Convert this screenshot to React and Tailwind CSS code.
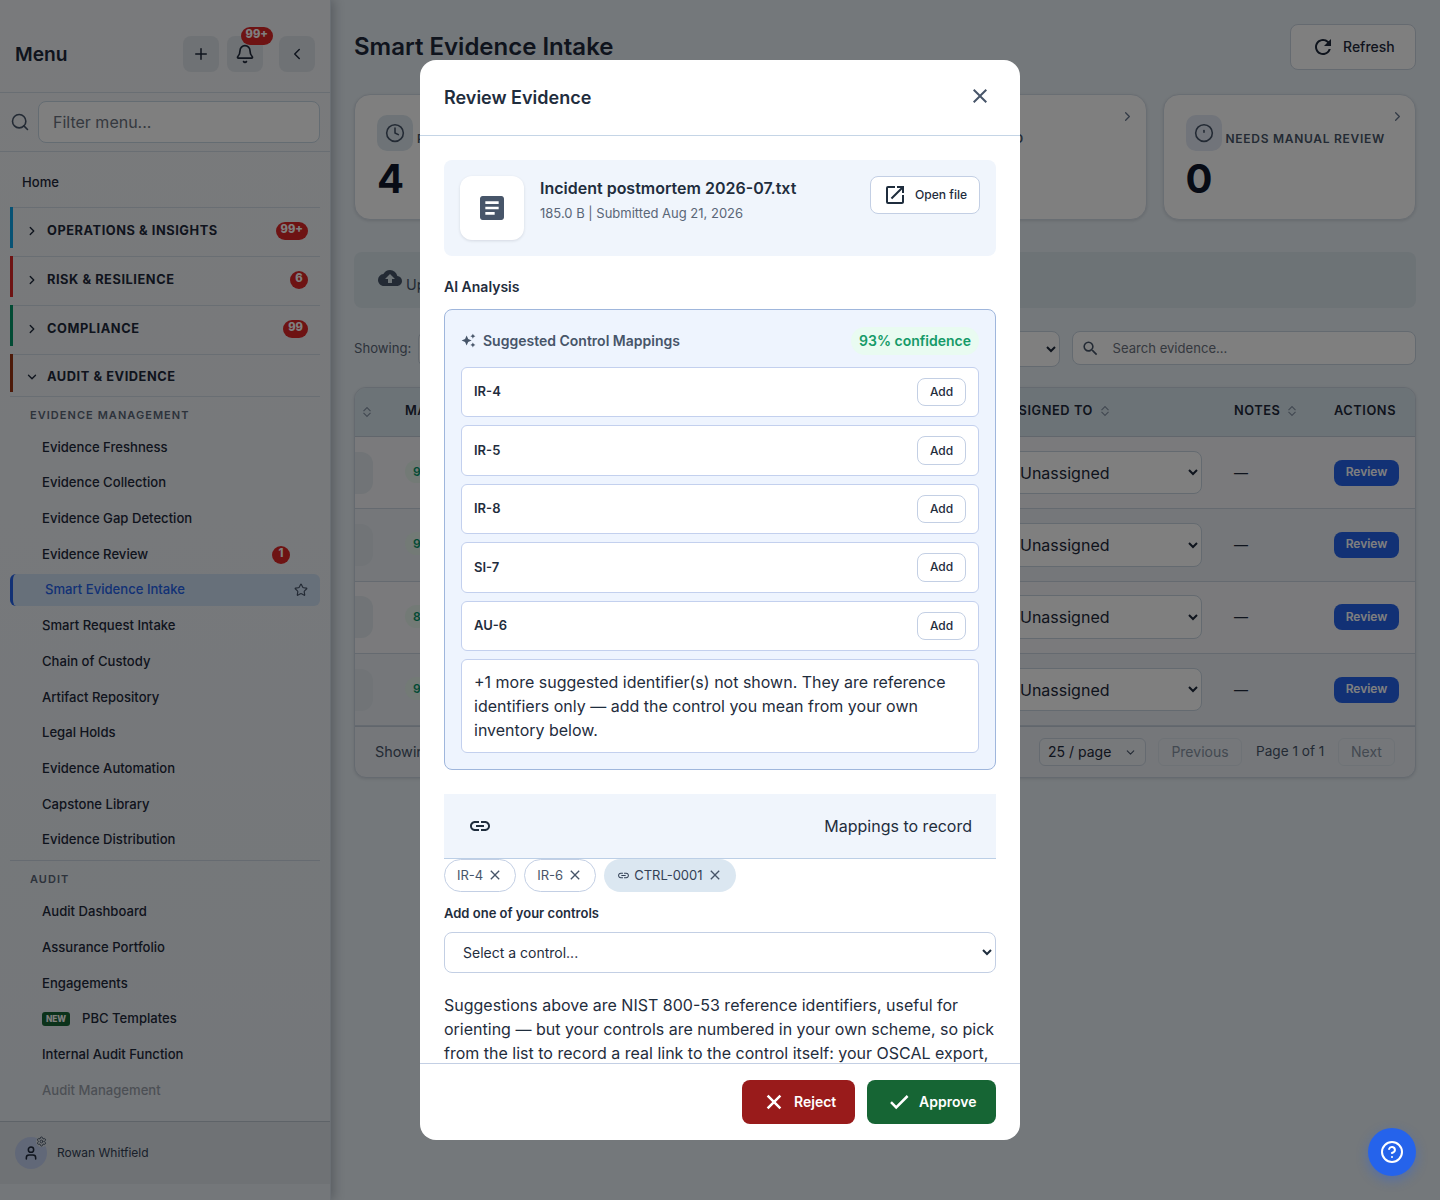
import {
  Bell,
  ChevronDown,
  ChevronLeft,
  ChevronRight,
  CircleHelp,
  Clock,
  Plus,
  Search,
  Settings,
  Star,
  User,
} from "lucide-react";
import {
  MdArticle,
  MdAutoAwesome,
  MdCheck,
  MdClose,
  MdCloudUpload,
  MdLink,
  MdOpenInNew,
  MdRefresh,
  MdSearch,
} from "react-icons/md";

const sections = [
  { label: "Operations & Insights", color: "border-[#0ea5e9]", badge: "99+" },
  { label: "Risk & Resilience", color: "border-[#dc2626]", badge: "6" },
  { label: "Compliance", color: "border-[#059669]", badge: "99" },
];

const evidenceLinks = [
  { label: "Evidence Freshness" },
  { label: "Evidence Collection" },
  { label: "Evidence Gap Detection" },
  { label: "Evidence Review", badge: "1" },
  { label: "Smart Evidence Intake", active: true },
  { label: "Smart Request Intake" },
  { label: "Chain of Custody" },
  { label: "Artifact Repository" },
  { label: "Legal Holds" },
  { label: "Evidence Automation" },
  { label: "Capstone Library" },
  { label: "Evidence Distribution" },
];

const auditLinks = [
  { label: "Audit Dashboard" },
  { label: "Assurance Portfolio" },
  { label: "Engagements" },
  { label: "PBC Templates", isNew: true },
  { label: "Internal Audit Function" },
  { label: "Audit Management", faded: true },
];

const rows = ["93%", "92%", "88%", "90%"];
const suggestions = ["IR-4", "IR-5", "IR-8", "SI-7", "AU-6"];

function CountBadge({ children }) {
  return (
    <span className="flex h-[18px] min-w-[18px] items-center justify-center rounded-full bg-[#dc2626] px-[5px] pb-[2px] text-[11.2px] leading-none font-extrabold text-white">
      {children}
    </span>
  );
}

function NavLink({ item }) {
  if (item.active) {
    return (
      <div className="mb-[3.72px] flex h-8 items-center justify-between rounded-md border-l-[3px] border-[#2563eb] bg-[#cfe0f5] pr-3 pl-8">
        <span className="text-[13.1px] font-medium text-[#2563eb]">{item.label}</span>
        <Star size={14} strokeWidth={2} className="text-[#475569]" />
      </div>
    );
  }
  return (
    <div className="mb-[3.72px] flex h-8 items-center justify-between pr-[30px] pl-8">
      <span className="flex items-center">
        {item.isNew && (
          <span className="mr-3 flex h-[14px] w-7 items-center justify-center rounded-[3px] bg-[#166534] text-[8.3px] font-extrabold text-white">
            NEW
          </span>
        )}
        <span
          className={
            item.faded
              ? "text-[13.1px] font-medium text-[#1e293b] opacity-40"
              : "text-[13.1px] font-medium text-[#1e293b]"
          }
        >
          {item.label}
        </span>
      </span>
      {item.badge && <CountBadge>{item.badge}</CountBadge>}
    </div>
  );
}

function Sidebar() {
  return (
    <aside className="relative z-10 flex w-[331px] shrink-0 flex-col border-r border-[#d5dee8] bg-linear-to-b from-[#f3f5f8] to-[#e8eef4] shadow-[3px_0_10px_rgba(15,23,42,0.25)]">
      <div className="flex h-[93px] items-center border-b border-[#d3dce6] pt-4 pr-[15px] pl-[15px]">
        <h2 className="flex-1 text-[19.2px] font-semibold text-[#1e293b]">Menu</h2>
        <div className="flex">
          <button className="flex size-9 items-center justify-center rounded-lg bg-[#dfe4ea] text-[#1e293b]">
            <Plus size={18} />
          </button>
          <button className="relative ml-2 flex size-9 items-center justify-center rounded-lg bg-[#dfe4ea] text-[#1e293b]">
            <Bell size={20} strokeWidth={2} />
            <span className="absolute -top-[9px] left-[13.5px]">
              <CountBadge>99+</CountBadge>
            </span>
          </button>
          <button className="ml-4 flex size-9 items-center justify-center rounded-lg bg-[#dfe4ea] text-[#1e293b]">
            <ChevronLeft size={18} />
          </button>
        </div>
      </div>
      <div className="flex h-[59px] items-center gap-2 border-b border-[#d3dce6] pr-2.5 pl-2.5">
        <Search size={20} strokeWidth={1.9} className="text-[#475569]" />
        <input
          className="h-[42px] min-w-0 flex-1 rounded-lg border border-[#c8d8e4] bg-white px-3.5 text-base placeholder:text-[#6b7280]"
          placeholder="Filter menu..."
        />
      </div>
      <nav className="min-h-0 flex-1 overflow-hidden pr-2.5 pl-2.5">
        <p className="mt-[20px] mb-[15px] pl-3 text-[13.1px] leading-5 font-medium text-[#1e293b]">Home</p>
        {sections.map((section) => (
          <div key={section.label} className="mb-2">
            <div
              className={`${section.color} flex h-[41px] items-center border-l-[3px] pt-[6px] pr-3 pl-3 shadow-[inset_0_1px_0_#d3dce6]`}
            >
              <ChevronRight size={14} strokeWidth={2.3} className="text-[#1e293b]" />
              <span className="ml-2 flex-1 text-[12.8px] font-bold tracking-[0.56px] text-[#1e293b] uppercase">
                {section.label}
              </span>
              <CountBadge>{section.badge}</CountBadge>
            </div>
          </div>
        ))}
        <div className="flex h-[38px] items-center border-l-[3px] border-[#9a3412] pt-[7px] pl-3 shadow-[inset_0_1px_0_#d3dce6]">
          <ChevronDown size={14} strokeWidth={2.3} className="text-[#1e293b]" />
          <span className="ml-2 text-[12.8px] font-bold tracking-[0.56px] text-[#1e293b] uppercase">
            Audit &amp; Evidence
          </span>
        </div>
        <div className="mt-1 border-t border-[#d3dce6]">
          <p className="mb-[6px] pt-[10px] pl-5 text-[11px] leading-4 font-semibold tracking-[1.05px] text-[#5a6677] uppercase">
            Evidence Management
          </p>
          <div className="pt-[2.4px]">
            {evidenceLinks.map((item) => (
              <NavLink key={item.label} item={item} />
            ))}
          </div>
        </div>
        <div className="mt-[1.6px] border-t border-[#cdd7e2]">
          <p className="mb-[9px] pt-[10px] pl-5 text-[11px] leading-4 font-semibold tracking-[1.05px] text-[#5a6677] uppercase">
            Audit
          </p>
          {auditLinks.map((item) => (
            <NavLink key={item.label} item={item} />
          ))}
        </div>
      </nav>
      <div className="mb-4 flex h-[63px] items-center border-t border-[#bcc6d0] bg-[#dee4ea] pl-[15px]">
        <div className="relative flex size-8 items-center justify-center rounded-full bg-[#c3d0f0]">
          <User size={16} strokeWidth={2.3} className="text-[#1e293b]" />
          <Settings size={11} className="absolute -top-px right-0 rounded-full bg-[#dee4ea] text-[#475569]" />
        </div>
        <span className="ml-2.5 text-[12px] text-[#334155]">Rowan Whitfield</span>
      </div>
    </aside>
  );
}

// Circle with a short tick, used by the manual review card
function DotCircle() {
  return (
    <svg width="20" height="20" viewBox="0 0 24 24" fill="none" stroke="currentColor" strokeWidth="1.9" strokeLinecap="round">
      <circle cx="12" cy="12" r="10" />
      <path d="M12 9v2" />
    </svg>
  );
}

function StatCard({ label, value, icon, blue }) {
  return (
    <div className="relative h-[126px] rounded-2xl border border-[#d3dce6] bg-white px-[22px] pt-[20px] shadow-[0_1px_3px_rgba(15,23,42,0.12)]">
      <div className="flex items-end gap-[4px]">
        <span
          className={
            blue
              ? "flex size-9 shrink-0 items-center justify-center rounded-[10px] bg-[#e2e8f4] text-[#475569]"
              : "flex size-9 shrink-0 items-center justify-center rounded-[10px] bg-[#dce7ee] text-[#475569]"
          }
        >
          {icon}
        </span>
        <span className="pb-[3px] text-xs leading-[18px] font-semibold tracking-[0.72px] whitespace-nowrap text-[#475569] uppercase">
          {label}
        </span>
      </div>
      <p className="mt-[6px] text-[40px] leading-[44px] font-bold text-[#0f172a]">{value}</p>
      <ChevronRight size={15} className="absolute top-[14px] right-[10.5px] text-[#64748b]" />
    </div>
  );
}

function SortIcon() {
  return (
    <svg width="10" height="12" viewBox="0 0 10 12" fill="none" stroke="#8593a5" strokeWidth="1.2">
      <path d="M1.5 5.2 5 1.7 8.5 5.2M1.5 6.8 5 10.3 8.5 6.8" />
    </svg>
  );
}

function EvidenceTable() {
  return (
    <div className="mt-5 overflow-hidden rounded-xl border border-[#cbd5e1] bg-[#eaeff5] shadow-[0_1px_3px_rgba(15,23,42,0.12)]">
      <div className="flex h-[49px] items-center border-b border-[#c2cdd9] bg-[#d9e6ee] pb-[3px] text-[12.8px] font-semibold tracking-[0.56px] text-[#1e293b] uppercase">
        <span className="w-[50px] pt-[2px] pl-[7px]">
          <SortIcon />
        </span>
        <span className="w-[595px]">Match</span>
        <span className="flex w-[234px] items-center gap-[7px]">
          Assigned to <SortIcon />
        </span>
        <span className="flex w-[100px] items-center gap-[7px]">
          Notes <SortIcon />
        </span>
        <span>Actions</span>
      </div>
      {rows.map((match, i) => (
        <div
          key={i}
          className={
            i % 2 === 0
              ? "flex h-[72.3px] items-center border-b border-[#cbd5e1] bg-[#f4f5f8]"
              : "flex h-[72.3px] items-center border-b border-[#cbd5e1] bg-[#eaeff5]"
          }
        >
          <span className="w-[50px]">
            <span className="block h-[42px] w-[18px] rounded-r-xl bg-[#e2e8ee]" />
          </span>
          <span className="w-[598px] pb-[5px]">
            <span className="rounded-full bg-[#e6f4ec] px-2 py-1 text-xs font-semibold text-[#059669]">{match}</span>
          </span>
          <select className="h-[43.5px] w-[199px] rounded-lg border border-[#c8d4e0] bg-white px-[12px] text-base text-[#1e293b]">
            <option>Unassigned</option>
          </select>
          <span className="ml-[32px] w-[100px] text-sm text-[#1e293b]">—</span>
          <button className="h-[26px] w-[65px] rounded-lg bg-[#2563eb] pb-px text-xs font-semibold text-white">
            Review
          </button>
        </div>
      ))}
      <div className="flex h-[51px] items-center border-t border-[#c2cdd9] px-5 text-sm text-[#475569]">
        <span className="flex-1 text-[14.4px]">Showing 1-4 of 4</span>
        <span className="flex h-7 w-[107px] items-center justify-between rounded-md border border-[#cbd5e1] bg-[#eef2f7] pr-2 pl-2 text-[#1e293b]">
          25 / page <ChevronDown size={13} className="text-[#475569]" />
        </span>
        <span className="ml-3 flex h-7 w-[84px] items-center justify-center rounded-md border border-[#dde5ed] text-[#8793a3]">
          Previous
        </span>
        <span className="ml-3.5 w-[82px] pb-px text-[13.6px]">Page 1 of 1</span>
        <span className="flex h-7 w-[57px] items-center justify-center rounded-md border border-[#dde5ed] text-[#8793a3]">
          Next
        </span>
      </div>
    </div>
  );
}

function IntakePage() {
  return (
    <main className="min-w-0 flex-1 pt-6 pr-6 pl-[23px]">
      <div className="flex items-start justify-between">
        <h1 className="pt-[5px] text-2xl leading-9 font-semibold text-[#1e293b]">Smart Evidence Intake</h1>
        <button className="flex h-[46px] w-[126px] items-center gap-2 rounded-lg border border-[#cbd5e1] bg-white pl-5 text-sm font-medium text-[#1e293b]">
          <MdRefresh size={24} /> Refresh
        </button>
      </div>
      <div className="mt-6 grid grid-cols-4 gap-4">
        <StatCard label="Pending" value="4" icon={<Clock size={20} strokeWidth={1.9} />} />
        <StatCard label="Approved" value="0" icon={<MdCheck size={20} />} />
        <StatCard label="Rejected" value="0" icon={<MdClose size={20} />} />
        <StatCard label="Needs manual review" value="0" blue icon={<DotCircle />} />
      </div>
      <div className="mt-8 flex h-[56px] items-center gap-[4px] rounded-lg bg-[#dae6ed] pl-6 text-[#475569]">
        <MdCloudUpload size={24} className="mb-[4px]" />
        <span className="pt-[10px] text-[14.4px]">Upload evidence</span>
      </div>
      <div className="mt-[23px] flex items-start">
        <span className="w-[64px] pt-[7px] text-[13.1px] leading-[21px] text-[#5a6677]">Showing:</span>
        <select className="h-[36px] w-[642px] rounded-lg border border-[#c8d4e0] bg-white px-3 text-sm text-[#1e293b]">
          <option>Pending review</option>
        </select>
        <div className="ml-3 flex h-[34px] flex-1 items-center rounded-lg border border-[#c8d4e0] bg-white pl-2 text-[#475569]">
          <MdSearch size={19} />
          <span className="ml-[12.5px] pt-px text-[13.1px] text-[#6b7280]">Search evidence...</span>
        </div>
      </div>
      <EvidenceTable />
    </main>
  );
}

function MappingChip({ label }) {
  return (
    <span className="flex h-[33px] items-center rounded-full border border-[#c3cfe4] bg-white pr-3 pl-3 text-[13px] text-[#475569]">
      {label}
      <MdClose size={16} className="ml-1" />
    </span>
  );
}

// Heavier marks than the Material ones, for the footer buttons
function ActionIcon({ d }) {
  return (
    <svg width="24" height="24" viewBox="0 0 24 24" fill="none" stroke="currentColor" strokeWidth="2.5">
      <path d={d} />
    </svg>
  );
}

function ReviewModal() {
  return (
    <div className="flex h-[1080px] w-[600px] flex-col overflow-hidden rounded-2xl bg-white text-[#1f2d3d]">
      <div className="flex h-[76px] shrink-0 items-center justify-between border-b border-[#c5d5e6] px-6">
        <h3 className="text-lg font-semibold">Review Evidence</h3>
        <button className="flex size-8 items-center justify-center pb-1 text-[#475569]">
          <MdClose size={24} />
        </button>
      </div>

      <div className="min-h-0 flex-1 overflow-hidden px-6 pt-6">
        <div className="flex h-24 items-start rounded-lg bg-[#f0f5fc] p-4">
          <div className="flex size-16 items-center justify-center rounded-xl bg-white shadow-[0_1px_3px_rgba(15,23,42,0.12)]">
            <MdArticle size={32} className="text-[#475569]" />
          </div>
          <div className="ml-4 flex-1">
            <p className="text-base leading-6 font-semibold">Incident postmortem 2026-07.txt</p>
            <p className="mt-[3px] text-[13px] leading-5 text-[#5a6677]">185.0 B | Submitted Aug 21, 2026</p>
          </div>
          <button className="flex h-[38px] w-[110px] items-center gap-2 rounded-lg border border-[#c3cfe4] bg-white pl-3 text-[12.1px] font-medium">
            <MdOpenInNew size={24} /> Open file
          </button>
        </div>

        <h4 className="mt-5 text-sm leading-[22px] font-semibold">AI Analysis</h4>
        <div className="mt-[11px] rounded-lg border border-[#9fb6dc] bg-[#eef4fe] p-4">
          <div className="flex h-[29px] items-center justify-between">
            <span className="flex items-center gap-[7px] text-sm font-semibold text-[#475569]">
              <MdAutoAwesome size={15} /> Suggested Control Mappings
            </span>
            <span className="rounded-full bg-[#e9fbf1] px-2 py-1 text-sm leading-5 font-semibold text-[#159a68]">
              93% confidence
            </span>
          </div>
          <div className="mt-3 flex flex-col gap-2">
            {suggestions.map((id) => (
              <div
                key={id}
                className="flex h-[50.4px] items-center justify-between rounded-md border border-[#c3d0ee] bg-white px-3"
              >
                <span className="text-[13px] font-semibold">{id}</span>
                <button className="h-[28.4px] w-[49px] rounded-lg border border-[#c3cfe4] text-xs font-medium">
                  Add
                </button>
              </div>
            ))}
            <p className="rounded-md border border-[#c3d0ee] bg-white px-3 py-2.5 text-base">
              +1 more suggested identifier(s) not shown. They are reference identifiers only — add the control you mean
              from your own inventory below.
            </p>
          </div>
        </div>

        <div className="mt-6 flex h-[65px] items-center justify-between border-b border-[#bccfe6] bg-[#f0f5fc] px-6">
          <MdLink size={24} />
          <span>Mappings to record</span>
        </div>
        <div className="flex gap-2">
          <MappingChip label="IR-4" />
          <MappingChip label="IR-6" />
          <span className="flex h-[33px] items-center rounded-full bg-[#dbe7f1] pr-[13px] pl-[13px] text-[13px] text-[#334155]">
            <MdLink size={13} className="mr-1" />
            CTRL-0001
            <MdClose size={16} className="ml-1 text-[#475569]" />
          </span>
        </div>
        <label className="mt-[11px] mb-[9px] block text-[13px] leading-5 font-semibold">Add one of your controls</label>
        <select className="h-[41px] w-full rounded-lg border border-[#c3cfe4] bg-white px-3.5 text-sm">
          <option>Select a control...</option>
        </select>
        <p className="mt-5 text-base">
          Suggestions above are NIST 800-53 reference identifiers, useful for orienting — but your controls are numbered
          in your own scheme, so pick from the list to record a real link to the control itself: your OSCAL export,
        </p>
      </div>

      <div className="flex h-[77px] shrink-0 items-center justify-end gap-3 border-t border-[#c3cfe4] px-6">
        <button className="flex h-11 w-[113px] items-center gap-2 rounded-lg bg-[#991b1b] pl-5 text-sm font-semibold text-white">
          <ActionIcon d="M5.6 5.6l12.8 12.8M18.4 5.6L5.6 18.4" /> Reject
        </button>
        <button className="flex h-11 w-[129px] items-center gap-2 rounded-lg bg-[#166534] pl-5 text-sm font-semibold text-white">
          <ActionIcon d="M4 12.2l5.2 5.2L20.6 6" /> Approve
        </button>
      </div>
    </div>
  );
}

function App() {
  return (
    <div className="relative h-[1200px] overflow-hidden bg-[#e8f0f6] font-['Inter',sans-serif]">
      <div className="flex h-full">
        <Sidebar />
        <IntakePage />
      </div>
      <div className="absolute inset-0 z-20 flex items-center justify-center bg-black/50">
        <ReviewModal />
      </div>
      <button className="absolute right-6 bottom-6 z-30 flex size-12 items-center justify-center rounded-full bg-[#2563eb] text-white shadow-[0_4px_12px_rgba(37,99,235,0.4)]">
        <CircleHelp size={24} />
      </button>
    </div>
  );
}

export default App;
